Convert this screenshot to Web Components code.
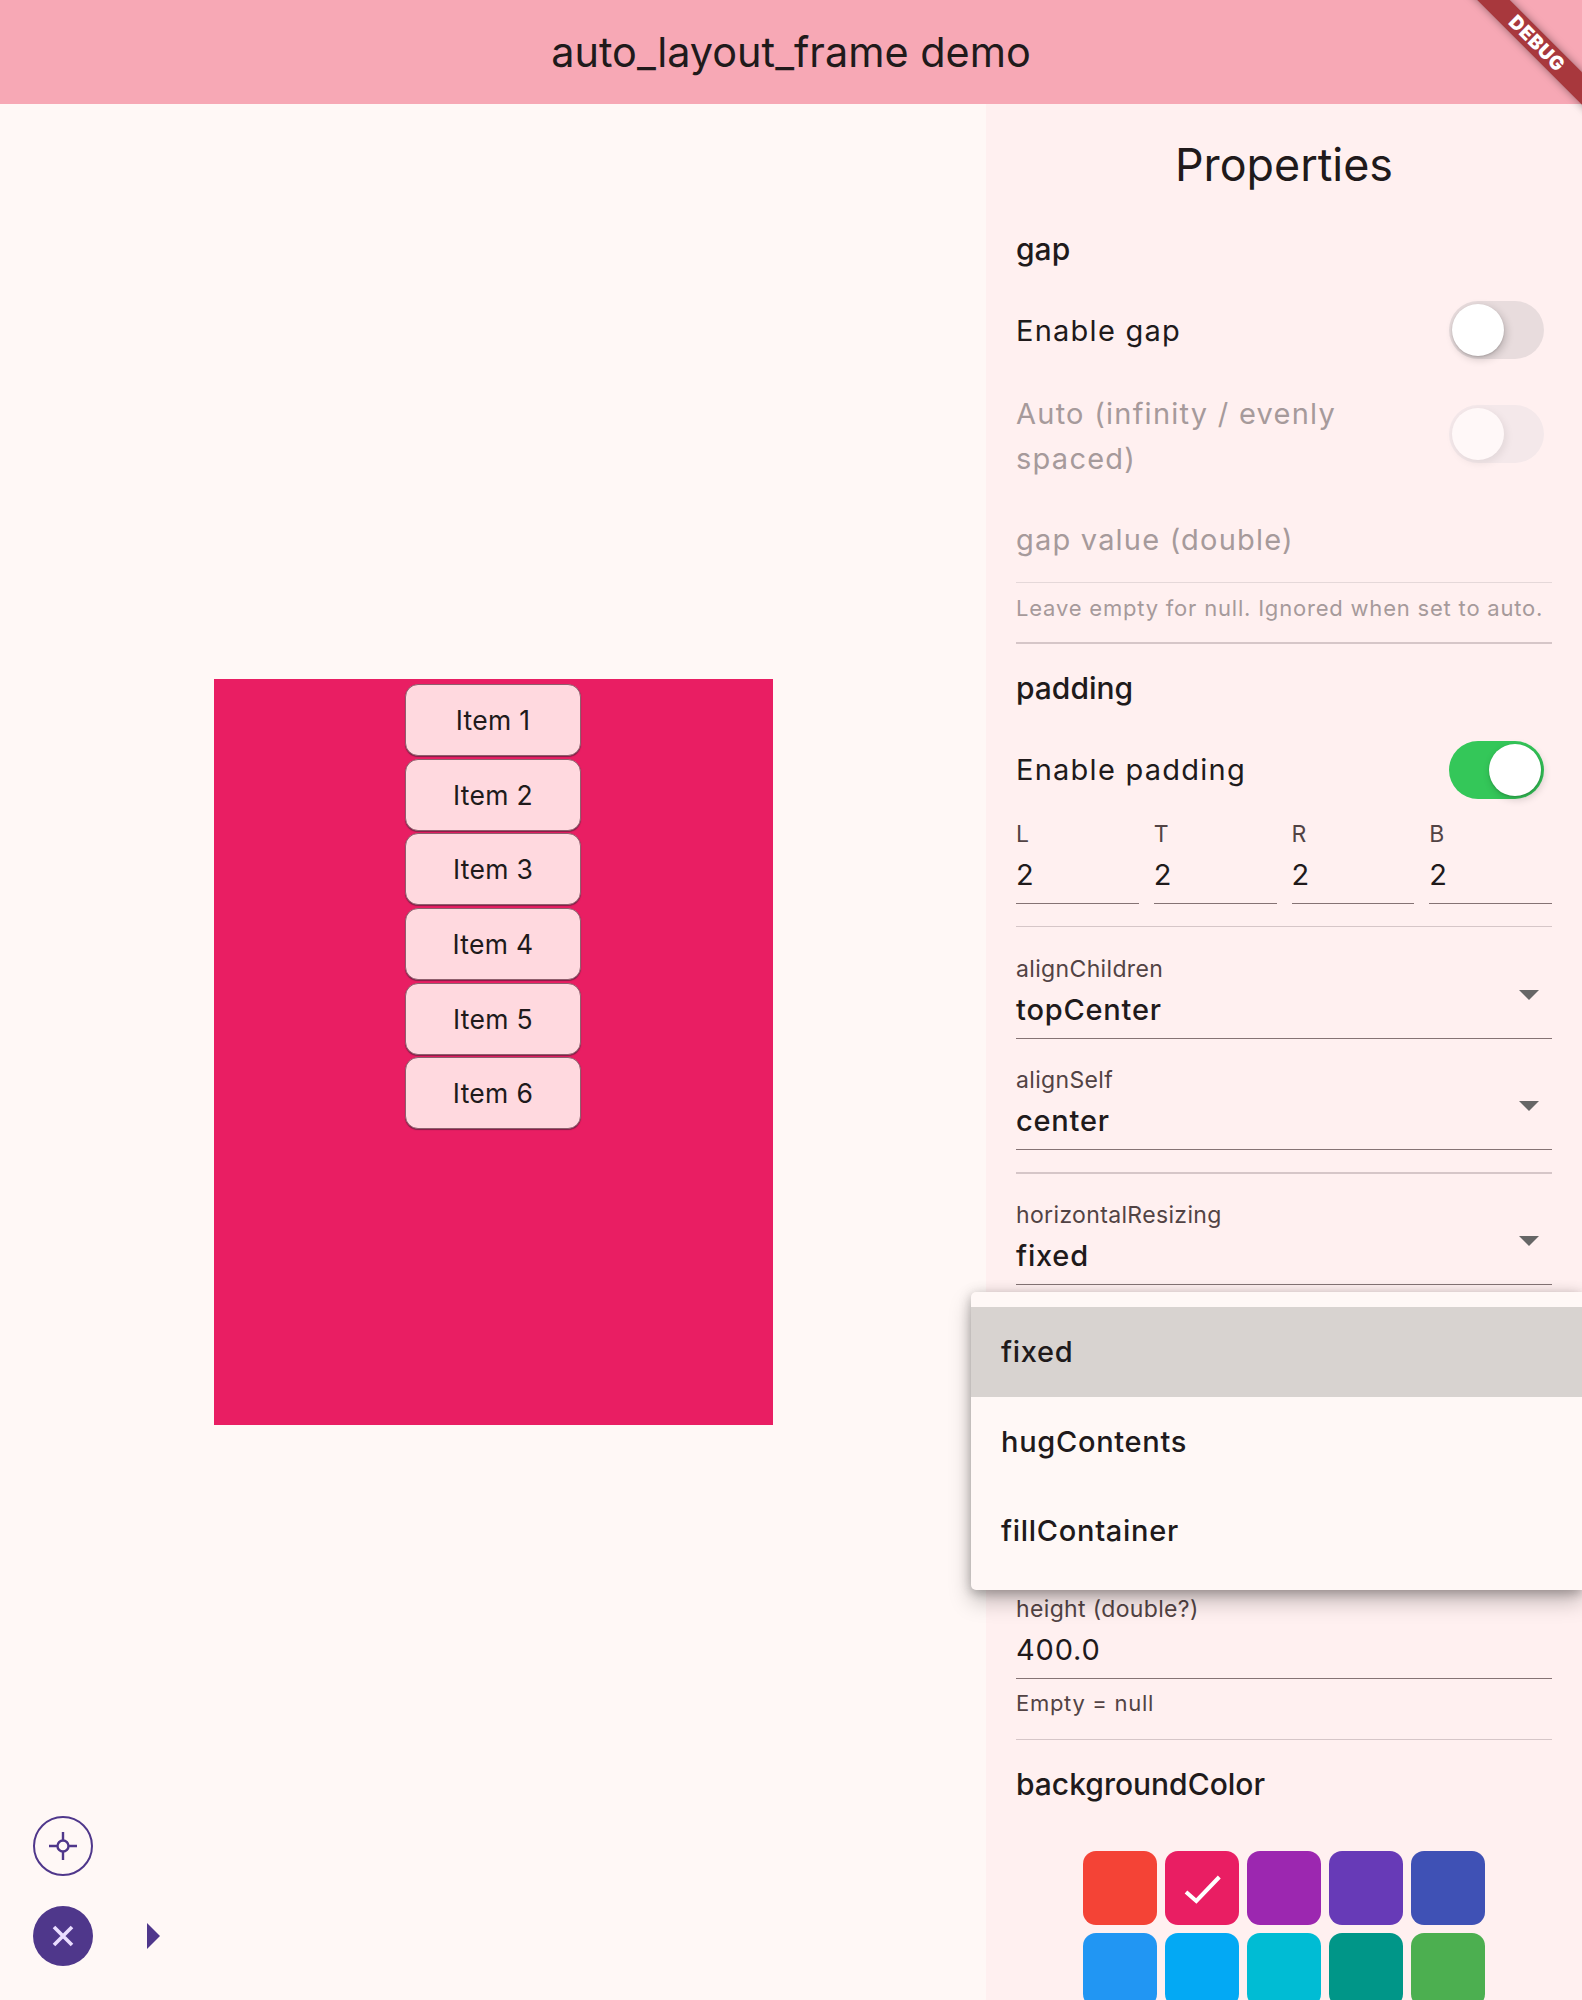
<!DOCTYPE html>
<html>
<head>
<meta charset="utf-8">
<title>auto_layout_frame demo</title>
<style>
html, body { margin: 0; height: 2000px; overflow: hidden; background: #fff8f6; }
body { font-family: Inter, "Noto Sans", sans-serif; color: #201a1b; }
</style>
</head>
<body>
<demo-app>
  <app-bar slot="bar">auto_layout_frame demo</app-bar>
  <demo-canvas slot="canvas">
    <demo-item>Item 1</demo-item>
    <demo-item>Item 2</demo-item>
    <demo-item>Item 3</demo-item>
    <demo-item>Item 4</demo-item>
    <demo-item>Item 5</demo-item>
    <demo-item>Item 6</demo-item>
  </demo-canvas>
  <prop-panel slot="panel">
    <prop-title>Properties</prop-title>
    <prop-heading style="margin-top:40px">gap</prop-heading>
    <prop-switch on-state="off" style="margin-top:37px">Enable gap</prop-switch>
    <prop-switch on-state="disabled" style="margin-top:32px">Auto (infinity / evenly<br>spaced)</prop-switch>
    <prop-field placeholder style="margin-top:39px">gap value (double)</prop-field>
    <prop-helper disabled style="margin-top:12px">Leave empty for null. Ignored when set to auto.</prop-helper>
    <prop-divider style="margin-top:21px"></prop-divider>
    <prop-heading style="margin-top:29px">padding</prop-heading>
    <prop-switch on-state="on" style="margin-top:38px">Enable padding</prop-switch>
    <prop-quad style="margin-top:23px">
      <prop-field label="L">2</prop-field>
      <prop-field label="T">2</prop-field>
      <prop-field label="R">2</prop-field>
      <prop-field label="B">2</prop-field>
    </prop-quad>
    <prop-divider style="margin-top:22px"></prop-divider>
    <prop-field select strong label="alignChildren" style="margin-top:30px">topCenter</prop-field>
    <prop-field select strong label="alignSelf" style="margin-top:29px">center</prop-field>
    <prop-divider style="margin-top:22px"></prop-divider>
    <prop-field select strong label="horizontalResizing" style="margin-top:29px">fixed</prop-field>
    <prop-field label="height (double?)" style="margin-top:312px">400.0</prop-field>
    <prop-helper style="margin-top:11px">Empty = null</prop-helper>
    <prop-divider style="margin-top:23px"></prop-divider>
    <prop-heading style="margin-top:29px">backgroundColor</prop-heading>
    <color-grid style="margin-top:52px">
      <color-swatch color="#f44336"></color-swatch>
      <color-swatch color="#e91e63" checked></color-swatch>
      <color-swatch color="#9c27b0"></color-swatch>
      <color-swatch color="#673ab7"></color-swatch>
      <color-swatch color="#3f51b5"></color-swatch>
      <color-swatch color="#2196f3"></color-swatch>
      <color-swatch color="#03a9f4"></color-swatch>
      <color-swatch color="#00bcd4"></color-swatch>
      <color-swatch color="#009688"></color-swatch>
      <color-swatch color="#4caf50"></color-swatch>
    </color-grid>
  </prop-panel>
  <fab-controls slot="overlay"></fab-controls>
  <drop-menu slot="overlay">
    <menu-option selected>fixed</menu-option>
    <menu-option>hugContents</menu-option>
    <menu-option>fillContainer</menu-option>
  </drop-menu>
  <debug-banner slot="overlay"></debug-banner>
</demo-app>

<script>
// small helper so every element below stays short
function define(name, css, html, setup) {
  const template = document.createElement("template");
  template.innerHTML = `<style>${css}</style>${html}`;
  customElements.define(name, class extends HTMLElement {
    constructor() {
      super();
      const shadowRoot = this.attachShadow({ mode: "open" });
      shadowRoot.append(template.content.cloneNode(true));
    }
    connectedCallback() {
      if (setup) setup(this, this.shadowRoot);
    }
  });
}

define("demo-app", `
  :host { display: grid; grid-template-columns: 986px 596px; grid-template-rows: 104px 1896px; width: 1582px; height: 2000px; position: relative; overflow: hidden; }
  ::slotted([slot=bar]) { grid-column: 1 / 3; }
`, `<slot name="bar"></slot><slot name="canvas"></slot><slot name="panel"></slot><slot name="overlay"></slot>`);

define("app-bar", `
  :host { display: flex; align-items: center; justify-content: center; background: #f7a8b5; font-size: 41.4px; color: #201a1b; }
`, `<slot></slot>`);

define("debug-banner", `
  :host { position: absolute; top: 0; right: 0; width: 140px; height: 140px; overflow: hidden; pointer-events: none; }
  .ribbon { position: absolute; top: 31.5px; left: 5px; width: 180px; height: 23px; transform: rotate(45deg); background: #a8383d; box-shadow: 0 0 8px rgba(0,0,0,.4); color: #fff; font-weight: 900; font-size: 19px; line-height: 23px; text-align: center; letter-spacing: .8px; }
`, `<div class="ribbon">DEBUG</div>`);

define("demo-canvas", `
  :host { display: flex; align-items: center; justify-content: center; background: #fff8f6; }
  .frame { width: 559px; height: 746px; box-sizing: border-box; padding: 5px 0 0; background: #e91e63; display: flex; flex-direction: column; align-items: center; gap: 2.67px; }
`, `<div class="frame"><slot></slot></div>`);

define("demo-item", `
  :host { display: flex; align-items: center; justify-content: center; box-sizing: border-box; width: 176px; height: 72px; background: #ffd9df; border-radius: 13px; border: 1.5px solid #8f5f6d; box-shadow: 0 1px 1px rgba(60,30,50,.6); font-size: 26.5px; letter-spacing: .3px; color: #201a1b; }
`, `<slot></slot>`);

define("fab-controls", `
  :host { position: absolute; left: 33px; bottom: 34px; display: flex; flex-direction: column; gap: 30px; }
  .row { display: flex; align-items: center; gap: 54px; }
  .fab { width: 60px; height: 60px; border-radius: 50%; box-sizing: border-box; display: flex; align-items: center; justify-content: center; }
  .outline { border: 2px solid #4f378b; }
  .fill { background: #4f378b; }
  svg { display: block; }
`, `
  <div class="fab outline">
    <svg width="32" height="32" viewBox="0 0 32 32" fill="none" stroke="#4f378b" stroke-width="2.4"><circle cx="16" cy="16" r="5.5"/><path d="M16 2v8.5M16 21.5V30M2 16h8.5M21.5 16H30"/></svg>
  </div>
  <div class="row">
    <div class="fab fill">
      <svg width="24" height="24" viewBox="0 0 24 24" fill="none" stroke="#eaddff" stroke-width="3.6"><path d="M3 3l18 18M21 3L3 21"/></svg>
    </div>
    <svg width="13" height="26" viewBox="0 0 13 26"><path d="M0 0l13 13L0 26z" fill="#4f378b"/></svg>
  </div>`);

define("prop-panel", `
  :host { display: flex; flex-direction: column; box-sizing: border-box; height: 1896px; padding: 32px 30px 0; background: #fff0f0; overflow: hidden; }
  ::slotted(*) { flex: none; }
`, `<slot></slot>`);

define("prop-title", `
  :host { display: block; text-align: center; font-size: 44.8px; line-height: 58px; color: #201a1b; }
`, `<slot></slot>`);

define("prop-heading", `
  :host { display: block; font-size: 30px; font-weight: 500; line-height: 30px; color: #201a1b; }
`, `<slot></slot>`);

define("prop-switch", `
  :host { display: flex; align-items: center; justify-content: space-between; min-height: 58px; font-size: 29px; line-height: 45px; letter-spacing: 1.25px; padding-right: 8px; }
  .track { width: 95px; height: 58px; border-radius: 29px; position: relative; background: #e8dcdd; flex: none; }
  .knob { position: absolute; top: 3px; left: 3px; width: 52px; height: 52px; border-radius: 50%; background: #fff; box-shadow: 2px 3px 8px rgba(0,0,0,.2), 0 1px 2px rgba(0,0,0,.15); }
  :host([on-state=on]) .track { background: #34c759; }
  :host([on-state=on]) .knob { left: 40px; }
  :host([on-state=disabled]) { color: #a69a9b; }
  :host([on-state=disabled]) .track { background: #f4e8ea; margin-bottom: 4px; }
  :host([on-state=disabled]) .knob { background: #fff8f8; box-shadow: 2px 3px 8px rgba(0,0,0,.08); }
`, `<div><slot></slot></div><div class="track"><div class="knob"></div></div>`);

define("prop-field", `
  :host { display: flex; flex: 1; box-sizing: border-box; border-bottom: 1.5px solid #857374; padding-bottom: 8px; position: relative; }
  .text { flex: 1; min-width: 0; }
  .label { font-size: 23px; line-height: 24px; color: #524344; margin-bottom: 9px; letter-spacing: .35px; }
  .value { font-size: 29px; line-height: 40px; letter-spacing: .8px; color: #201a1b; }
  .arrow { display: none; align-self: flex-start; margin: 33px 13px 0 0; width: 0; height: 0; border: 10px solid transparent; border-top-color: #666; border-bottom: 0; }
  :host([select]) .arrow { display: block; }
  :host([strong]) .value { font-weight: 500; }
  :host([placeholder]) { border-bottom-color: #e5d8d9; padding-bottom: 22px; }
  :host([placeholder]) .value { color: #a69a9b; letter-spacing: 1.2px; }
`, `<div class="text"><div class="label"></div><div class="value"><slot></slot></div></div><div class="arrow"></div>`,
(el, root) => {
  const label = root.querySelector(".label");
  if (el.hasAttribute("label")) label.textContent = el.getAttribute("label");
  else label.remove();
});

define("prop-helper", `
  :host { display: block; font-size: 22px; line-height: 26px; letter-spacing: .7px; color: #524344; }
  :host([disabled]) { color: #a69a9b; letter-spacing: .8px; }
`, `<slot></slot>`);

define("prop-divider", `
  :host { display: block; height: 1.5px; background: #d6c6c8; }
`, ``);

define("prop-quad", `
  :host { display: flex; gap: 15px; }
`, `<slot></slot>`);

define("color-grid", `
  :host { display: grid; grid-template-columns: repeat(5, 74px); gap: 8px; justify-content: center; }
`, `<slot></slot>`);

define("color-swatch", `
  :host { display: flex; align-items: center; justify-content: center; height: 74px; border-radius: 13px; }
  svg { display: none; }
  :host([checked]) svg { display: block; }
`, `<svg width="74" height="74" viewBox="0 0 74 74" fill="none" stroke="#fff" stroke-width="4"><path d="M21 41l10.3 9 23-24"/></svg>`,
(el) => { el.style.background = el.getAttribute("color"); });

define("drop-menu", `
  :host { position: absolute; left: 971px; top: 1292px; width: 611px; box-sizing: border-box; padding: 15px 0 14px; background: #fff8f6; border-radius: 5px 0 0 5px; box-shadow: 0 11px 21px rgba(0,0,0,.25), 0 4px 10px rgba(0,0,0,.15), 0 0 14px rgba(0,0,0,.12); display: flex; flex-direction: column; }
`, `<slot></slot>`);

define("menu-option", `
  :host { display: flex; align-items: center; height: 89.5px; padding-left: 30px; font-size: 29px; font-weight: 500; letter-spacing: .7px; color: #201a1b; }
  :host([selected]) { background: #d8d3d0; }
`, `<slot></slot>`);
</script>
</body>
</html>
